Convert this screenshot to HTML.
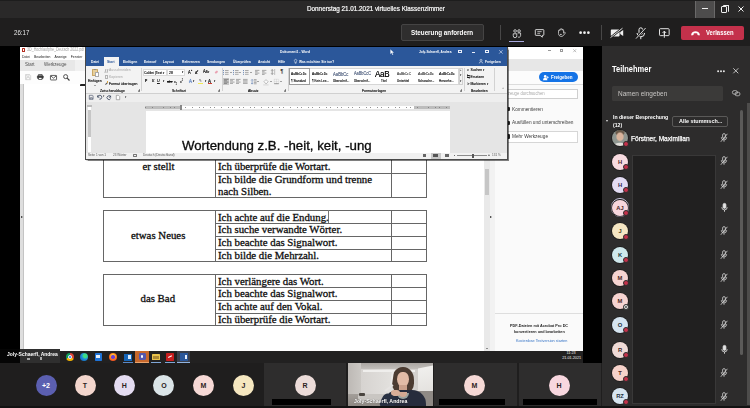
<!DOCTYPE html>
<html lang="de">
<head>
<meta charset="utf-8">
<title>Donnerstag 21.01.2021 virtuelles Klassenzimmer</title>
<style>
*{box-sizing:border-box;margin:0;padding:0}
html,body{width:750px;height:408px;overflow:hidden;background:#000}
body{position:relative;font-family:"Liberation Sans",sans-serif;color:#fff;-webkit-font-smoothing:antialiased}
.a{position:absolute}
.t{position:absolute;white-space:nowrap;line-height:1}
svg{position:absolute;overflow:visible}
/* ---------- Teams chrome ---------- */
#titlebar{left:0;top:0;width:750px;height:18px;background:#2a2929;border-top:1px solid #1d1d1d}
#toolbar{left:0;top:18px;width:750px;height:28px;background:#1f1e1e}
#stage{left:0;top:46px;width:602px;height:317px;background:#000}
#strip{left:0;top:363px;width:602px;height:45px;background:#1f1e1e}
#panel{left:602px;top:46px;width:148px;height:362px;background:#2d2c2c}
.btn{border-radius:2px}
.sx{transform-origin:0 50%;transform:scaleX(.86)}

/* ---------- shared screen ---------- */
#screen{left:20.3px;top:46.5px;width:562.5px;height:316.5px;background:#fff;overflow:hidden}
.ser{font-family:"Liberation Serif",serif;color:#0c0c0c;font-size:10.82px;-webkit-text-stroke:0.3px #111}
.ln{position:absolute;background:#666}
.tiny{font-size:4.4px;color:#333}

/* ---------- Word ---------- */
#word{left:85.1px;top:46.5px;width:422.6px;height:113.2px;background:#e5e5e5;border:0.9px solid #4a4a4a;border-top:none;box-shadow:0.5px 0.5px 1px rgba(0,0,0,.5)}
.wt{position:absolute;white-space:nowrap;line-height:1;font-size:4.3px;color:#fff;font-weight:bold;transform-origin:0 50%;transform:scaleX(.77)}
.rt{position:absolute;white-space:nowrap;line-height:1;font-size:4.1px;color:#1c1c1c;text-shadow:0 0 0.25px #333;transform-origin:0 50%;transform:scaleX(.84)}
.gsep{position:absolute;top:68px;width:0.5px;height:23px;background:#d2d2d2}

.at{position:absolute;white-space:nowrap;line-height:1;font-size:5.4px;color:#3c3c3c;transform-origin:0 50%;transform:scaleX(.88)}
.tb{position:absolute;top:353px;width:8px;height:8px}
/* avatars */
.av{position:absolute;border-radius:50%;text-align:center;font-weight:bold;color:#3a2a2a}
.pav{width:16px;height:16px;font-size:5.8px;line-height:16px;left:612px;box-shadow:0 0 0 0.8px #1c1b1b}
.dot{position:absolute;width:6px;height:6px;border-radius:50%;background:#c4314b;border:1px solid #2d2c2c;left:623px}
.sav{width:21px;height:21px;font-size:7px;line-height:21px;top:375px;color:#2c2222}
.tile{position:absolute;top:363px;height:45px;background:#2e2d2d}
.lbl{position:absolute;height:6px;background:#000;top:399px}
</style>
</head>
<body>
<!-- ================= TITLE BAR ================= -->
<div id="titlebar" class="a"></div>
<div class="t sx" style="left:307px;top:5px;font-size:7.8px;-webkit-text-stroke:0.2px #fff;transform:scaleX(.812)">Donnerstag 21.01.2021 virtuelles Klassenzimmer</div>
<div class="a" style="left:695px;top:1px;width:20px;height:17px;background:#4d4c4c;border-left:1px solid #6a6969;border-right:1px solid #6a6969"></div>
<div class="a" style="left:702px;top:8px;width:6px;height:1px;background:#eee"></div>
<div class="a" style="left:720.5px;top:6px;width:6px;height:7px;border:1px solid #eee;border-radius:1px"></div>
<div class="a" style="left:722.5px;top:4.5px;width:6px;height:7px;border-top:1px solid #eee;border-right:1px solid #eee;border-radius:1px"></div>
<svg style="left:738px;top:6px" width="6" height="6" viewBox="0 0 6 6"><path d="M0.5 0.5L5.5 5.5M5.5 0.5L0.5 5.5" stroke="#eee" stroke-width="1" fill="none"/></svg>

<!-- ================= TOOLBAR ================= -->
<div id="toolbar" class="a"></div>
<div class="t sx" style="left:14px;top:28.5px;font-size:7.6px;color:#e8e8e8;transform:scaleX(.81)">26:17</div>
<div class="a btn" style="left:401px;top:24px;width:83px;height:17px;background:#2f2e2e;border:1px solid #454444"></div>
<div class="t sx" style="left:411.3px;top:28.8px;font-size:7.6px;font-weight:bold;transform:scaleX(.828)">Steuerung anfordern</div>
<div class="a" style="left:499.5px;top:25px;width:1px;height:15px;background:#484747"></div>
<div class="a" style="left:601px;top:25px;width:1px;height:15px;background:#484747"></div>
<div class="a" style="left:509px;top:40.5px;width:15px;height:1.5px;background:#a6a7dc"></div>


<!-- toolbar icons -->
<svg style="left:511.5px;top:28.5px" width="10" height="9.2" viewBox="0 0 13 12" fill="none" stroke="#f0f0f0" stroke-width="1">
 <circle cx="4" cy="2.6" r="1.7"/><circle cx="9.2" cy="2.6" r="1.7"/>
 <path d="M1.6 6.2h4.6v2.6a2.3 2.6 0 0 1-4.6 0z"/><path d="M7.3 5.2h3.9v3.4a2.2 2.5 0 0 1-3.6 1.6"/>
</svg>
<svg style="left:535.2px;top:28.8px" width="9.3" height="9.3" viewBox="0 0 12 12" fill="none" stroke="#f0f0f0" stroke-width="1.1">
 <path d="M1.2 0.8h9.4a0.8 0.8 0 0 1 .8 .8v5.8a0.8 0.8 0 0 1-.8 .8H9.4v2.4L6.6 8.2H1.2a0.8 0.8 0 0 1-.8-.8V1.6a0.8 0.8 0 0 1 .8-.8z"/>
 <path d="M3 3.4h5.6M3 5.6h3.6" stroke-width="0.9"/>
</svg>
<svg style="left:557.4px;top:28.2px" width="8.4" height="10" viewBox="0 0 12 14" fill="none" stroke="#f0f0f0" stroke-width="1">
 <path d="M2.2 7.4V3.6a0.9 0.9 0 0 1 1.8 0V2.2a0.9 0.9 0 0 1 1.8 0v-.4a0.9 0.9 0 0 1 1.8 0v1.2a0.9 0.9 0 0 1 1.8 0v4.2l1.2-1.2a0.9 0.9 0 0 1 1.2 1.2L9 10.8a4 4 0 0 1-6.8-2.6z"/>
 <circle cx="5.6" cy="9" r="1" fill="#f0f0f0" stroke="none"/>
</svg>
<svg style="left:578.6px;top:31.4px" width="11" height="3.4" viewBox="0 0 11 3.4" fill="#f2f2f2"><circle cx="1.6" cy="1.7" r="1.35"/><circle cx="5.5" cy="1.7" r="1.35"/><circle cx="9.4" cy="1.7" r="1.35"/></svg>
<svg style="left:611px;top:28px" width="13" height="10" viewBox="0 0 13 10" fill="#f0f0f0" stroke="none">
 <path d="M0.6 1.6h7.2a0.8 0.8 0 0 1 .8 .8v5.2a0.8 0.8 0 0 1-.8 .8H0.6a0.8 0.8 0 0 1-.8-.8V2.4a0.8 0.8 0 0 1 .8-.8z"/><path d="M9.2 4l3-2v6l-3-2z"/>
 <path d="M-0.5 9.6L11.5 0.2" stroke="#1f1e1e" stroke-width="2.2"/><path d="M-0.5 9.6L11.5 0.2" stroke="#f0f0f0" stroke-width="0.9"/>
</svg>
<svg style="left:635px;top:26.5px" width="12" height="13" viewBox="0 0 12 13" fill="none" stroke="#f0f0f0" stroke-width="1">
 <rect x="4" y="0.8" width="3.6" height="6.6" rx="1.8"/><path d="M2 6a3.8 3.8 0 0 0 7.6 0M5.8 9.8v2.4"/>
 <path d="M1 11.6L10.6 1" stroke="#1f1e1e" stroke-width="2.4"/><path d="M1 11.6L10.6 1" stroke-width="0.9"/>
</svg>
<svg style="left:659px;top:28px" width="11" height="10.2" viewBox="0 0 13 12" fill="none" stroke="#f0f0f0" stroke-width="1.1">
 <rect x="0.6" y="0.8" width="11.4" height="8.2" rx="1"/><path d="M6.3 11.2V4M4.2 5.8l2.1-2.1 2.1 2.1" />
 <path d="M6.3 9v2.4" stroke="#1f1e1e" stroke-width="2.6"/><path d="M6.3 11.4V4.2"/>
</svg>
<div class="a btn" style="left:680.5px;top:25.5px;width:63px;height:14.5px;background:#c4314b"></div>
<svg style="left:691px;top:30.5px" width="9" height="5" viewBox="0 0 9 5" fill="#fff"><path d="M0.2 3.2C0.6 1.2 2.6 0.2 4.5 0.2s3.9 1 4.3 3l-.3 1.2-2-.5-.2-1.3c-1.1-.4-2.5-.4-3.6 0l-.2 1.3-2 .5z"/></svg>
<div class="t sx" style="left:705.5px;top:29.2px;font-size:7.4px;font-weight:bold;transform:scaleX(.8)">Verlassen</div>

<!-- ================= STAGE ================= -->
<div id="stage" class="a"></div>


<div id="screen" class="a"></div>
<!-- Acrobat chrome (left part) -->
<div class="a" style="left:20.3px;top:59.5px;width:487px;height:11.5px;background:#f1f1f1"></div>
<div class="a" style="left:20.3px;top:59.5px;width:55px;height:11.5px;background:#e8e8e8"></div>
<div class="a" style="left:22px;top:48px;width:2.6px;height:4px;border:0.8px solid #b52a1c;border-radius:0.6px"></div>
<div class="t tiny" id="atitle" style="left:26.8px;top:48.2px;color:#a2a2a2;font-size:4.6px;transform-origin:0 50%;transform:scaleX(.788)">3D_Hochlaufphe_Deutsch 2022.pdf</div>
<div class="t tiny" id="amenu" style="left:22.3px;top:54.8px;font-size:4.2px;color:#222;word-spacing:3.8px;transform-origin:0 50%;transform:scaleX(.815)">Datei Bearbeiten Anzeige Fenster</div>
<div class="t" id="atab1" style="left:25px;top:62.4px;font-size:5.6px;color:#505050;transform-origin:0 50%;transform:scaleX(.8)">Start</div>
<div class="t" id="atab2" style="left:44.2px;top:62.4px;font-size:5.6px;color:#505050;transform-origin:0 50%;transform:scaleX(.8)">Werkzeuge</div>
<div class="a" style="left:20.3px;top:71px;width:65px;height:13px;background:#fdfdfd"></div>
<svg style="left:24.5px;top:74.2px" width="6.2" height="6.2" viewBox="0 0 7 7" fill="none" stroke="#c9c9c9" stroke-width="0.8"><path d="M0.6 0.6h4.6l1.2 1.2v4.6H0.6z"/><path d="M2 0.8v1.8h2.6V0.8M1.8 6.2V4h3.4v2.2"/></svg>
<svg style="left:37px;top:74.2px" width="6.6" height="6" viewBox="0 0 8 7" fill="none" stroke="#3a3a3a" stroke-width="0.9"><path d="M1.8 2V0.5h4.4V2"/><rect x="0.5" y="2" width="7" height="3.2" rx="0.5" fill="#3a3a3a"/><rect x="2" y="4" width="4" height="2.6" fill="#fff"/></svg>
<svg style="left:50px;top:74.6px" width="7" height="5.6" viewBox="0 0 8 6.4" fill="none" stroke="#3a3a3a" stroke-width="0.9"><rect x="0.5" y="0.5" width="7" height="5.2" rx="0.6"/><path d="M0.8 1l3.2 2.6L7.2 1"/></svg>
<svg style="left:63px;top:74px" width="7" height="7" viewBox="0 0 8 8" fill="none" stroke="#3a3a3a" stroke-width="1"><circle cx="3" cy="3" r="2.3"/><path d="M4.8 4.8L7.4 7.4" stroke-width="1.3"/></svg>
<!-- Acrobat left pane strip -->
<div class="a" style="left:20.3px;top:84px;width:3.4px;height:267px;background:#dedede;border-right:0.6px solid #c4c4c4"></div>
<div class="a" style="left:21.2px;top:216px;width:0;height:0;border-left:2.2px solid #222;border-top:1.8px solid transparent;border-bottom:1.8px solid transparent"></div>
<div class="a" style="left:80px;top:84.3px;width:6px;height:1.6px;background:#222;border-radius:1px 0 0 0"></div>

<!-- PDF document tables -->
<!-- table 1 (partial) -->
<div class="ln" style="left:102.6px;top:159px;width:0.9px;height:38.5px"></div>
<div class="ln" style="left:214.6px;top:159px;width:0.9px;height:38.5px"></div>
<div class="ln" style="left:391.2px;top:159px;width:0.9px;height:38.5px"></div>
<div class="ln" style="left:426px;top:159px;width:0.9px;height:38.5px"></div>
<div class="ln" style="left:102.6px;top:196.8px;width:324px;height:0.9px"></div>
<div class="ln" style="left:214.6px;top:172.9px;width:212px;height:0.9px"></div>
<div class="t ser" style="left:142.4px;top:160.6px">er stellt</div>
<div class="t ser" style="left:218px;top:161px">Ich überprüfe die Wortart.</div>
<div class="t ser" style="left:218px;top:174.3px">Ich bilde die Grundform und trenne</div>
<div class="t ser" style="left:218px;top:186.3px">nach Silben.</div>
<!-- table 2 -->
<div class="a" style="left:102.6px;top:210.3px;width:324.3px;height:52px;border:0.9px solid #666"></div>
<div class="ln" style="left:214.6px;top:210.3px;width:0.9px;height:52px"></div>
<div class="ln" style="left:391.2px;top:210.3px;width:0.9px;height:52px"></div>
<div class="ln" style="left:214.6px;top:223.1px;width:212px;height:0.9px"></div>
<div class="ln" style="left:214.6px;top:235.9px;width:212px;height:0.9px"></div>
<div class="ln" style="left:214.6px;top:248.7px;width:212px;height:0.9px"></div>
<div class="ln" style="left:328.3px;top:210.3px;width:0.6px;height:13px;background:#777"></div>
<div class="t ser" style="left:131px;top:229.5px">etwas Neues</div>
<div class="t ser" style="left:218px;top:211.6px">Ich achte auf die Endung.</div>
<div class="t ser" style="left:218px;top:224.4px">Ich suche verwandte Wörter.</div>
<div class="t ser" style="left:218px;top:237.2px">Ich beachte das Signalwort.</div>
<div class="t ser" style="left:218px;top:250px">Ich bilde die Mehrzahl.</div>
<!-- table 3 -->
<div class="a" style="left:102.6px;top:274.2px;width:324.3px;height:52px;border:0.9px solid #666"></div>
<div class="ln" style="left:214.6px;top:274.2px;width:0.9px;height:52px"></div>
<div class="ln" style="left:391.2px;top:274.2px;width:0.9px;height:52px"></div>
<div class="ln" style="left:214.6px;top:287px;width:212px;height:0.9px"></div>
<div class="ln" style="left:214.6px;top:299.8px;width:212px;height:0.9px"></div>
<div class="ln" style="left:214.6px;top:312.6px;width:212px;height:0.9px"></div>
<div class="t ser" style="left:140.5px;top:293.4px">das Bad</div>
<div class="t ser" style="left:218px;top:275.5px">Ich verlängere das Wort.</div>
<div class="t ser" style="left:218px;top:288.3px">Ich beachte das Signalwort.</div>
<div class="t ser" style="left:218px;top:301.1px">Ich achte auf den Vokal.</div>
<div class="t ser" style="left:218px;top:313.9px">Ich überprüfe die Wortart.</div>

<!-- Acrobat scrollbar + splitter -->
<div class="a" style="left:484px;top:159px;width:5.8px;height:192px;background:#e9e9e9"></div>
<div class="a" style="left:485px;top:169px;width:4px;height:25.5px;background:#c6c6c6"></div>
<div class="a" style="left:489.8px;top:159px;width:5.2px;height:192px;background:#f2f2f2"></div>
<div class="a" style="left:490.4px;top:216px;width:0;height:0;border-left:2.4px solid #222;border-top:1.9px solid transparent;border-bottom:1.9px solid transparent"></div>
<div class="a" style="left:485.6px;top:348.4px;width:0;height:0;border-top:1.8px solid #333;border-left:1.4px solid transparent;border-right:1.4px solid transparent"></div>
<!-- Acrobat right pane -->
<div class="a" style="left:495px;top:84px;width:88px;height:267px;background:#fafafa"></div>



<!-- Acrobat right part -->
<div class="a" style="left:507.8px;top:46.5px;width:75px;height:12.5px;background:#fff"></div>
<div class="a" style="left:507.8px;top:59px;width:75px;height:12px;background:#e7e7e7"></div>
<div class="a" style="left:507.8px;top:71px;width:75px;height:14px;background:#fcfcfc"></div>
<div class="a" style="left:507.8px;top:84.4px;width:75px;height:0.5px;background:#dcdcdc"></div>
<div class="a" style="left:547.6px;top:50.4px;width:3px;height:0.6px;background:#999"></div>
<div class="a" style="left:560px;top:48.6px;width:3.4px;height:3.2px;border:0.6px solid #999"></div>
<svg style="left:573.4px;top:48.6px" width="3.4" height="3.4" viewBox="0 0 3.4 3.4"><path d="M0.2 0.2L3.2 3.2M3.2 0.2L0.2 3.2" stroke="#999" stroke-width="0.6"/></svg>
<div class="a" style="left:539px;top:72.4px;width:39px;height:9.6px;border-radius:5px;background:#1473e6"></div>
<svg style="left:543.4px;top:74.6px" width="6" height="5.4" viewBox="0 0 6 5.4" fill="#fff"><circle cx="2.2" cy="1.4" r="1.3"/><path d="M0 5.2a2.2 2.4 0 0 1 4.4 0z"/><path d="M4.6 1.2v2.4M3.4 2.4h2.4" stroke="#fff" stroke-width="0.7"/></svg>
<div class="at" style="left:551.4px;top:74.6px;font-size:5.4px;color:#fff;font-weight:bold;transform:scaleX(.84)">Freigeben</div>
<div class="a" style="left:500px;top:88.6px;width:78px;height:10.8px;background:#fff;border:0.6px solid #cfcfcf"></div>
<div class="at" style="left:497.6px;top:91.6px;font-size:4.8px;color:#a9a9a9">Werkzeuge durchsuchen</div>
<div class="at" style="left:512px;top:107px">Kommentieren</div>
<div class="at" style="left:512px;top:120.4px">Ausfüllen und unterschreiben</div>
<div class="a" style="left:500px;top:131px;width:78px;height:11.6px;background:#fff;border:0.6px solid #d6d6d6"></div>
<div class="at" style="left:512px;top:134px">Mehr Werkzeuge</div>
<div class="a" style="left:495px;top:313px;width:88px;height:0.5px;background:#dedede"></div>
<div class="at" style="left:510.4px;top:324px;font-size:4.2px;font-weight:bold;color:#222;transform:scaleX(.9)">PDF-Dateien mit Acrobat Pro DC</div>
<div class="at" style="left:513.6px;top:329.6px;font-size:4.2px;font-weight:bold;color:#222;transform:scaleX(.9)">konvertieren und bearbeiten</div>
<div class="at" style="left:516px;top:338.6px;font-size:4.2px;color:#2f6fc4;transform:scaleX(.9)">Kostenlose Testversion starten</div>

<div class="a" style="left:507.6px;top:106.6px;width:2px;height:4px;background:#222;border-radius:0 1px 1px 0"></div><div class="a" style="left:507.6px;top:120.6px;width:2px;height:4px;background:#222;border-radius:0 1px 1px 0"></div><div class="a" style="left:507.6px;top:134.4px;width:2px;height:4.4px;background:#222;border-radius:0 1px 1px 0"></div>
<!-- ================= WORD WINDOW ================= -->
<div id="word" class="a"></div>
<div class="a" style="left:85.8px;top:46.5px;width:421.4px;height:19.7px;background:#2b579a"></div>
<div class="wt" style="left:280px;top:50.2px;font-size:4.4px">Dokument1  -  Word</div>
<div class="wt" style="left:419px;top:50.2px;font-size:4.4px;transform:scaleX(.72)">Joly-Schaerfl, Andrea</div>
<svg style="left:389.5px;top:48.6px" width="4.6" height="6.4" viewBox="0 0 4.6 6.4"><path d="M0.3 0.2v5l1.2-1.1 0.9 2 0.9-.4-.9-1.9h1.7z" fill="#fff" stroke="#2b579a" stroke-width="0.2"/></svg>
<div class="a" style="left:458px;top:50.2px;width:3.6px;height:3px;border:0.6px solid #e8eefa"></div>
<div class="a" style="left:471.8px;top:52px;width:3px;height:0.6px;background:#e8eefa"></div>
<div class="a" style="left:485.4px;top:50px;width:3.4px;height:3.4px;border:0.6px solid #e8eefa"></div>
<svg style="left:498.6px;top:49.8px" width="3.8" height="3.8" viewBox="0 0 3.8 3.8"><path d="M0.2 0.2L3.6 3.6M3.6 0.2L0.2 3.6" stroke="#e8eefa" stroke-width="0.6"/></svg>
<!-- tabs -->
<div class="a" style="left:104px;top:56.6px;width:14.6px;height:9.8px;background:#f3f3f3"></div>
<div class="wt" style="left:90.6px;top:59.6px">Datei</div>
<div class="wt" style="left:107.4px;top:59.6px;color:#2b579a">Start</div>
<div class="wt" style="left:123px;top:59.6px">Einfügen</div>
<div class="wt" style="left:143.6px;top:59.6px">Entwurf</div>
<div class="wt" style="left:163.4px;top:59.6px">Layout</div>
<div class="wt" style="left:182px;top:59.6px">Referenzen</div>
<div class="wt" style="left:207px;top:59.6px">Sendungen</div>
<div class="wt" style="left:233px;top:59.6px">Überprüfen</div>
<div class="wt" style="left:258px;top:59.6px">Ansicht</div>
<div class="wt" style="left:277.6px;top:59.6px">Hilfe</div>
<svg style="left:293.6px;top:58.6px" width="3.2" height="5" viewBox="0 0 3.2 5" fill="none" stroke="#fff" stroke-width="0.5"><path d="M1.6 0.3a1.3 1.3 0 0 1 .8 2.3v.9H.8v-.9a1.3 1.3 0 0 1 .8-2.3zM.9 4.3h1.4"/></svg>
<div class="wt" style="left:298.6px;top:59.6px">Was möchten Sie tun?</div>
<svg style="left:479.4px;top:58.8px" width="4" height="4.6" viewBox="0 0 4 4.6" fill="none" stroke="#fff" stroke-width="0.5"><circle cx="2" cy="1.3" r="1"/><path d="M0.3 4.4a1.7 1.7 0 0 1 3.4 0"/></svg>
<div class="wt" style="left:484.6px;top:59.6px">Freigeben</div>
<!-- ribbon -->
<div class="a" style="left:85.8px;top:66.2px;width:421.4px;height:36px;background:#f3f3f3"></div>
<div class="a" style="left:85.8px;top:93.2px;width:421.4px;height:9px;background:#eee"></div><div class="a" style="left:85.8px;top:93.2px;width:421.4px;height:0.6px;background:#d0d0d0"></div>
<div class="gsep" style="left:141px"></div><div class="gsep" style="left:221.6px"></div><div class="gsep" style="left:287.6px"></div><div class="gsep" style="left:464px"></div><div class="gsep" style="left:493.8px"></div>
<!-- clipboard group -->
<div class="a" style="left:92.4px;top:69.4px;width:5.2px;height:6.4px;background:#e7cf9b;border:0.5px solid #c8a766;border-radius:0.6px"></div>
<div class="a" style="left:93.8px;top:68.6px;width:2.4px;height:1.6px;background:#8a8a8a;border-radius:0.4px"></div>
<div class="a" style="left:95.4px;top:71.8px;width:3.8px;height:4.8px;background:#fff;border:0.5px solid #a9a9a9"></div>
<div class="rt" style="left:88px;top:78.8px">Einfügen</div>
<div class="a" style="left:94.4px;top:85px;width:0;height:0;border-top:1.2px solid #555;border-left:1px solid transparent;border-right:1px solid transparent"></div>
<div class="a" style="left:105px;top:68.6px;width:2.6px;height:3.6px;border-left:0.6px solid #b0b0b0;border-right:0.6px solid #b0b0b0;transform:skewX(-14deg)"></div><div class="rt" style="left:109.4px;top:68.4px;color:#a6a6a6;text-shadow:none">Ausschneiden</div>
<div class="a" style="left:104.8px;top:75.2px;width:3px;height:3.6px;border:0.5px solid #b4b4b4"></div><div class="rt" style="left:109.4px;top:75.2px;color:#a6a6a6;text-shadow:none">Kopieren</div>
<div class="a" style="left:104.8px;top:83.2px;width:3.4px;height:1.2px;background:#555;transform:rotate(-45deg)"></div><div class="a" style="left:106.6px;top:81.2px;width:1.8px;height:1.8px;background:#d9a441"></div><div class="rt" style="left:109.4px;top:81.8px">Format übertragen</div>
<div class="rt" style="left:99.6px;top:88.6px">Zwischenablage</div>
<!-- font group -->
<div class="a" style="left:142.8px;top:69.4px;width:24.2px;height:6.6px;background:#fff;border:0.5px solid #dadada"></div>
<div class="rt" style="left:144.4px;top:70.8px">Calibri (Text<span style="font-size:3px"> ▾</span></div>
<div class="a" style="left:167.4px;top:69.4px;width:17.6px;height:6.6px;background:#fff;border:0.5px solid #dadada"></div>
<div class="rt" style="left:169.4px;top:70.8px">28</div>
<div class="rt" style="left:181.6px;top:71.2px;font-size:3px">▾</div>
<div class="rt" style="left:188px;top:70.2px;font-size:4.8px">A<sup style="font-size:2.6px">▴</sup></div>
<div class="rt" style="left:195px;top:70.6px;font-size:4.2px">A<sup style="font-size:2.6px">▾</sup></div>
<div class="rt" style="left:202.6px;top:70.4px;font-size:4.6px">Aa<span style="font-size:3px"> ▾</span></div>
<div class="a" style="left:215px;top:70.8px;width:3.2px;height:2.4px;background:#e9a3b3;transform:rotate(-40deg);border-radius:0.5px"></div>
<div class="rt" style="left:145.2px;top:79.4px;font-size:4.4px;font-weight:bold">F</div>
<div class="rt" style="left:151.6px;top:79.4px;font-size:4.4px;font-style:italic;font-family:'Liberation Serif',serif">K</div>
<div class="rt" style="left:157.4px;top:79.4px;font-size:4.4px;text-decoration:underline">U</div>
<div class="rt" style="left:162.6px;top:80.4px;font-size:3px">▾</div>
<div class="rt" style="left:166.6px;top:79.8px;font-size:4px;text-decoration:line-through">abc</div>
<div class="rt" style="left:174.2px;top:79.8px;font-size:4px">x<sub style="font-size:2.6px">2</sub></div>
<div class="rt" style="left:180px;top:79.8px;font-size:4px">x<sup style="font-size:2.6px">2</sup></div>
<div class="rt" style="left:188.6px;top:78.8px;font-size:5.2px;color:#6a8fd0;text-shadow:0 0 0.8px #2b579a">A</div>
<div class="rt" style="left:193.4px;top:80.4px;font-size:3px">▾</div>
<div class="a" style="left:198px;top:83.2px;width:5px;height:1.3px;background:#f2ea55"></div>
<div class="rt" style="left:198.8px;top:78.8px;font-size:4.2px;color:#666">✎</div>
<div class="rt" style="left:204.6px;top:80.4px;font-size:3px">▾</div>
<div class="rt" style="left:208.4px;top:78.6px;font-size:5px;font-weight:bold;color:#444">A</div>
<div class="a" style="left:208.2px;top:83.3px;width:4.2px;height:1.2px;background:#cf3a2e"></div>
<div class="rt" style="left:214px;top:80.4px;font-size:3px">▾</div>
<div class="rt" style="left:172px;top:88.6px">Schriftart</div>
<div class="rt" style="left:138px;top:88.8px;font-size:3px;color:#777">◢</div>
<div class="rt" style="left:217.6px;top:88.8px;font-size:3px;color:#777">◢</div>
<!-- paragraph group -->
<svg style="left:223.4px;top:70px" width="1.2" height="5" viewBox="0 0 1.2 5"><path d="M0 0.5h1M0 2.4h1M0 4.3h1" stroke="#4a6ea8" stroke-width="0.8"/></svg>
<svg style="left:225.20000000000002px;top:70px" width="3.6" height="5" viewBox="0 0 3.6 5"><path d="M0 0.5h3.6M0 2.4h3.6M0 4.3h3.6" stroke="#6a6a6a" stroke-width="0.55"/></svg>
<div class="a" style="left:229.8px;top:71.8px;width:0;height:0;border-top:1.1px solid #555;border-left:0.9px solid transparent;border-right:0.9px solid transparent"></div>
<svg style="left:233px;top:70px" width="1.2" height="5" viewBox="0 0 1.2 5"><path d="M0 0.5h1M0 2.4h1M0 4.3h1" stroke="#4a6ea8" stroke-width="0.8"/></svg>
<svg style="left:234.8px;top:70px" width="3.6" height="5" viewBox="0 0 3.6 5"><path d="M0 0.5h3.6M0 2.4h3.6M0 4.3h3.6" stroke="#6a6a6a" stroke-width="0.55"/></svg>
<div class="a" style="left:239.4px;top:71.8px;width:0;height:0;border-top:1.1px solid #555;border-left:0.9px solid transparent;border-right:0.9px solid transparent"></div>
<svg style="left:243.4px;top:70px" width="1.2" height="5" viewBox="0 0 1.2 5"><path d="M0 0.5h1M0 2.4h1M0 4.3h1" stroke="#4a6ea8" stroke-width="0.8"/></svg>
<svg style="left:245.20000000000002px;top:70px" width="3.6" height="5" viewBox="0 0 3.6 5"><path d="M0 0.5h3.6M0 2.4h3.6M0 4.3h3.6" stroke="#6a6a6a" stroke-width="0.55"/></svg>
<div class="a" style="left:249.8px;top:71.8px;width:0;height:0;border-top:1.1px solid #555;border-left:0.9px solid transparent;border-right:0.9px solid transparent"></div>
<svg style="left:255.4px;top:70px" width="4.4" height="5" viewBox="0 0 4.4 5"><path d="M0 0.40h4.4M0 1.75h2.6M0 3.10h4.4M0 4.45h2.6" stroke="#6a6a6a" stroke-width="0.55" fill="none"/></svg>
<svg style="left:262.2px;top:70px" width="4.4" height="5" viewBox="0 0 4.4 5"><path d="M0 0.40h4.4M0 1.75h2.6M0 3.10h4.4M0 4.45h2.6" stroke="#6a6a6a" stroke-width="0.55" fill="none"/></svg>
<svg style="left:271px;top:69.4px" width="4.4" height="6" viewBox="0 0 4.4 6" fill="none" stroke="#555" stroke-width="0.55"><path d="M1.2 0.6v4.8M0.2 1.6l1-1 1 1M0.2 4.4l1 1 1-1M3 1h1.2M3 3h1.2M3 5h1.2"/></svg>
<div class="rt" style="left:280.4px;top:69.4px;font-size:5px;color:#444;transform:none">¶</div>
<div class="a" style="left:222.6px;top:78.2px;width:6.6px;height:6.6px;background:#c6c6c6"></div>
<svg style="left:223.6px;top:79.2px" width="4.6" height="5" viewBox="0 0 4.6 5"><path d="M0 0.40h4.6M0 1.75h3M0 3.10h4.6M0 4.45h3" stroke="#555" stroke-width="0.55" fill="none"/></svg>
<svg style="left:229.9px;top:79.2px" width="4.6" height="5" viewBox="0 0 4.6 5"><path d="M0 0.40h4.6M0 1.75h3M0 3.10h4.6M0 4.45h3" stroke="#6a6a6a" stroke-width="0.55" fill="none"/></svg>
<svg style="left:236.3px;top:79.2px" width="4.6" height="5" viewBox="0 0 4.6 5"><path d="M0 0.40h4.6M0 1.75h3M0 3.10h4.6M0 4.45h3" stroke="#6a6a6a" stroke-width="0.55" fill="none"/></svg>
<svg style="left:242.7px;top:79.2px" width="4.6" height="5" viewBox="0 0 4.6 5"><path d="M0 0.40h4.6M0 1.75h4.6M0 3.10h4.6M0 4.45h4.6" stroke="#6a6a6a" stroke-width="0.55" fill="none"/></svg>
<svg style="left:250.6px;top:78.8px" width="5.6" height="5.6" viewBox="0 0 5.6 5.6" fill="none" stroke-width="0.55"><path d="M1.1 0.5v4.6M0.2 1.4l.9-.9.9.9M0.2 4.2l.9.9.9-.9" stroke="#4a6ea8"/><path d="M2.8 0.6h2.8M2.8 2h2.8M2.8 3.4h2.8M2.8 4.8h2.8" stroke="#6a6a6a"/></svg>
<div class="a" style="left:257.4px;top:81.2px;width:0;height:0;border-top:1.1px solid #555;border-left:0.9px solid transparent;border-right:0.9px solid transparent"></div>
<svg style="left:262.6px;top:78.6px" width="6" height="6.4" viewBox="0 0 6 6.4" fill="none"><path d="M1 2.6l2-2 2.2 2.2-2.2 2.2z" stroke="#888" stroke-width="0.5" fill="#fafafa"/><path d="M0.2 5.9h5.4" stroke="#d4d4d4" stroke-width="0.9"/></svg>
<div class="a" style="left:270px;top:81.2px;width:0;height:0;border-top:1.1px solid #555;border-left:0.9px solid transparent;border-right:0.9px solid transparent"></div>
<svg style="left:274px;top:79.2px" width="5" height="5" viewBox="0 0 5 5" fill="none"><path d="M0.3 0.3h4.4v4.4M0.3 0.3v4.4M2.5 0.3v4.4M0.3 2.5h4.4" stroke="#aaa" stroke-width="0.4" stroke-dasharray="0.5 0.5"/><path d="M0.2 4.7h4.6" stroke="#555" stroke-width="0.6"/></svg>
<div class="a" style="left:280.4px;top:81.2px;width:0;height:0;border-top:1.1px solid #555;border-left:0.9px solid transparent;border-right:0.9px solid transparent"></div>
<div class="rt" style="left:247.6px;top:88.6px">Absatz</div>
<div class="rt" style="left:283.6px;top:88.8px;font-size:3px;color:#777">◢</div>
<!-- styles gallery -->
<div class="a" style="left:289px;top:68px;width:170.4px;height:17.2px;background:#fff;border:0.5px solid #d6d6d6"></div>
<div class="a" style="left:289.4px;top:68.3px;width:20.4px;height:16.6px;border:0.7px solid #9c9c9c"></div>
<div class="rt" style="left:291.4px;top:72.6px;font-size:3.8px;color:#222">AaBbCcDc</div>
<div class="rt" style="left:291.4px;top:79.8px;font-size:3.6px">¶ Standard</div>
<div class="rt" style="left:312.4px;top:72.6px;font-size:3.8px;color:#222">AaBbCcDc</div>
<div class="rt" style="left:312.4px;top:79.8px;font-size:3.6px">¶ Kein Lee...</div>
<div class="rt" style="left:333px;top:71.6px;font-size:5px;color:#7f94bd">AaBbCc</div>
<div class="rt" style="left:333px;top:79.8px;font-size:3.6px">Überschrif...</div>
<div class="rt" style="left:354px;top:71.8px;font-size:4.6px;color:#7f94bd">AaBbCcC</div>
<div class="rt" style="left:354px;top:79.8px;font-size:3.6px">Überschrif...</div>
<div class="rt" style="left:375.4px;top:68.6px;font-size:9.6px;color:#111;letter-spacing:-0.3px">AaB</div>
<div class="rt" style="left:380.6px;top:79.8px;font-size:3.6px">Titel</div>
<div class="rt" style="left:397px;top:72.6px;font-size:3.8px;color:#666">AaBbCcC</div>
<div class="rt" style="left:397px;top:79.8px;font-size:3.6px">Untertitel</div>
<div class="rt" style="left:417.6px;top:72.6px;font-size:3.8px;font-style:italic;color:#555">AaBbCcDc</div>
<div class="rt" style="left:417.6px;top:79.8px;font-size:3.6px">Schwache...</div>
<div class="rt" style="left:438.6px;top:72.6px;font-size:3.8px;font-style:italic;color:#222">AaBbCcDc</div>
<div class="rt" style="left:438.6px;top:79.8px;font-size:3.6px">Hervorhe...</div>
<div class="a" style="left:459.4px;top:68px;width:3.6px;height:17.2px;background:#f3f3f3;border:0.5px solid #d0d0d0"></div>
<div class="rt" style="left:460.2px;top:69.6px;font-size:2.6px;color:#999">▴</div>
<div class="rt" style="left:460.2px;top:75.2px;font-size:2.6px;color:#555">▾</div>
<div class="rt" style="left:460.2px;top:80.8px;font-size:2.6px;color:#555">▾</div>
<div class="rt" style="left:361.6px;top:88.6px">Formatvorlagen</div>
<div class="rt" style="left:460.2px;top:88.8px;font-size:3px;color:#777">◢</div>
<!-- edit group -->
<div class="rt" style="left:467.4px;top:68.2px"><span style="font-size:4.6px">⌕</span> Suchen <span style="font-size:3px">▾</span></div>
<div class="rt" style="left:467.4px;top:75.2px"><span style="font-size:4.2px">⇆</span> Ersetzen</div>
<div class="rt" style="left:467.4px;top:81.8px"><span style="font-size:4.2px;color:#777">➤</span> Markieren <span style="font-size:3px">▾</span></div>
<div class="rt" style="left:471px;top:88.6px">Bearbeiten</div>
<div class="rt" style="left:501.6px;top:88.4px;font-size:3.4px;color:#444">⌃</div>
<!-- quick access -->
<svg style="left:89px;top:95.2px" width="4.4" height="4.6" viewBox="0 0 4.4 4.6" fill="none" stroke="#39455c" stroke-width="0.6"><path d="M0.3 0.3h3.2l.6 .6v3.4H0.3z"/><path d="M1.2 4.2V2.8h2v1.4" /></svg>
<svg style="left:96.6px;top:95.2px" width="5" height="4.4" viewBox="0 0 5 4.4" fill="none" stroke="#39455c" stroke-width="0.8"><path d="M0.6 0.4v1.8h1.8M0.8 2a2 2 0 1 1 1.6 2.2"/></svg>
<div class="rt" style="left:102.6px;top:96.4px;font-size:2.6px;color:#777">▾</div>
<svg style="left:107.4px;top:95.2px" width="4.6" height="4.6" viewBox="0 0 4.6 4.6" fill="none" stroke="#39455c" stroke-width="0.8"><path d="M3.6 0.6v1.6H2M3.8 2.2a1.9 1.9 0 1 0-.2 1.4"/></svg>
<svg style="left:116.4px;top:95px" width="4" height="5" viewBox="0 0 4 5" fill="#fff" stroke="#666" stroke-width="0.5"><path d="M0.3 0.3h2.2l1.2 1.2v3.2H0.3z"/></svg>
<div class="rt" style="left:125.4px;top:96.2px;font-size:2.8px;color:#666">▾</div>
<!-- rulers -->
<div class="a" style="left:88px;top:105.4px;width:3.2px;height:46.2px;background:#fff"></div>
<div class="a" style="left:88px;top:110.4px;width:3.2px;height:26.6px;background:#c6c6c6"></div>
<div class="a" style="left:87.4px;top:104.6px;width:4.4px;height:2.6px;background:#f7f7f7;border:0.4px solid #bbb"></div>
<div class="a" style="left:145px;top:105.6px;width:305.4px;height:3.2px;background:#fff"></div>
<div class="a" style="left:145px;top:105.6px;width:36.4px;height:3.2px;background:#bdbdbd"></div>
<div class="a" style="left:414px;top:105.6px;width:36.4px;height:3.2px;background:#bdbdbd"></div>
<div class="a" style="left:145px;top:106.9px;width:305.4px;height:0.7px;background:repeating-linear-gradient(90deg,#777 0 0.6px,transparent 0.6px 3.63px);opacity:.8"></div>
<div class="a" style="left:180.4px;top:104.6px;width:1.8px;height:5.2px;background:#f4f4f4;border:0.4px solid #888"></div>
<!-- page -->
<div class="a" style="left:145.8px;top:110.6px;width:304.6px;height:42.2px;background:#fff"></div>
<div class="t" id="big" style="left:182.2px;top:139.2px;font-size:13.6px;color:#0a0a0a;-webkit-text-stroke:0.35px #111;transform-origin:0 50%;transform:scaleX(.974)">Wortendung z.B. -heit, keit, -ung</div>
<!-- status bar -->
<div class="a" style="left:85.8px;top:152.6px;width:421.4px;height:6px;background:#f1f1f1"></div>
<div class="rt" style="left:88px;top:153.7px;font-size:3.7px;color:#555;text-shadow:none">Seite 1 von 1</div>
<div class="rt" style="left:113px;top:153.7px;font-size:3.7px;color:#555;text-shadow:none">23 Wörter</div>
<div class="a" style="left:133.4px;top:153.7px;width:3.6px;height:3.4px;border:0.5px solid #777;border-radius:0.4px"></div>
<div class="rt" style="left:143px;top:153.7px;font-size:3.7px;color:#555;text-shadow:none">Deutsch (Deutschland)</div>
<div class="a" style="left:423px;top:153.7px;width:3.4px;height:3.4px;background:repeating-linear-gradient(#666 0 0.5px,transparent 0.5px 1.1px)"></div>
<div class="a" style="left:430.6px;top:152.6px;width:10.4px;height:6px;background:#c8c8c8"></div>
<div class="a" style="left:433.2px;top:153.6px;width:5px;height:3.8px;background:repeating-linear-gradient(#555 0 0.5px,transparent 0.5px 1.1px);border:0.4px solid #555"></div>
<div class="a" style="left:445.4px;top:153.7px;width:3.4px;height:3.4px;background:repeating-linear-gradient(#666 0 0.5px,transparent 0.5px 1.1px)"></div>
<div class="rt" style="left:454.4px;top:153.1px;font-size:4px">-</div>
<div class="a" style="left:457.4px;top:155.4px;width:30px;height:0.5px;background:#8a8a8a"></div>
<div class="a" style="left:472.4px;top:153.6px;width:1.2px;height:4px;background:#555"></div>
<div class="rt" style="left:488px;top:153.3px;font-size:4px">+</div>
<div class="rt" style="left:492.4px;top:153.7px;font-size:3.7px;color:#555;text-shadow:none">131 %</div>


<!-- Windows taskbar of shared screen -->
<div class="a" style="left:20.3px;top:351px;width:562.5px;height:12px;background:#222121"></div>
<div class="a" style="left:0;top:348.6px;width:60px;height:14.4px;background:#2f2f2f"></div>
<div class="a" style="left:0;top:348.6px;width:20.3px;height:14.4px;background:#050505"></div>
<div class="t sx" style="left:6.8px;top:351.8px;font-size:5.4px;font-weight:bold;color:#fff;transform:scaleX(.92)">Joly-Schaerfl, Andrea</div>
<div class="a" style="left:27px;top:357.6px;width:3px;height:2.2px;border:0.5px solid #aaa"></div>
<div class="a" style="left:39.6px;top:357.4px;width:1.6px;height:2.6px;border-left:0.6px solid #aaa;border-right:0.6px solid #aaa"></div>
<!-- taskbar icons -->
<div class="tb" style="left:66px;border-radius:50%;background:conic-gradient(#db4437 0 120deg,#f4b400 120deg 240deg,#0f9d58 240deg 360deg)"></div>
<div class="a" style="left:68.2px;top:355.2px;width:3.6px;height:3.6px;border-radius:50%;background:#4285f4;border:0.6px solid #fff"></div>
<div class="tb" style="left:80.4px;border-radius:50%;background:radial-gradient(circle at 65% 35%,#3ddc84 0 25%,#1f8fdd 45%,#0c59a4 100%)"></div>
<div class="tb" style="left:95px;top:353.4px;width:7.4px;height:7.4px;background:#1e73d8;border-radius:0.8px"></div>
<div class="a" style="left:96.4px;top:354.6px;width:3.6px;height:3px;background:#fff;opacity:.9"></div>
<div class="tb" style="left:109.4px;border-radius:50%;background:radial-gradient(circle at 50% 40%,#ffcf3a 0 25%,#ff7a1a 50%,#d8262c 100%)"></div>
<div class="a" style="left:111.4px;top:355.4px;width:3.4px;height:3.4px;border-radius:50%;background:#6b3fd6"></div>
<div class="tb" style="left:124px;top:353.6px;width:8px;height:7px;background:#1565b8"></div>
<div class="a" style="left:127.6px;top:354.8px;width:3.6px;height:4.4px;background:#d9ecff"></div>
<div class="a" style="left:122.6px;top:361.6px;width:10.6px;height:0.8px;background:#5a89c8"></div>
<div class="a" style="left:135.4px;top:351px;width:13.6px;height:12px;background:#c7682c"></div>
<div class="a" style="left:139px;top:353.2px;width:6.6px;height:6.6px;border-radius:1.4px;background:#5558af"></div>
<div class="a" style="left:141.4px;top:354.8px;width:2px;height:3.2px;background:#fff;border-radius:1px"></div>
<div class="a" style="left:135.4px;top:362px;width:13.6px;height:1px;background:#e9a56f"></div>
<div class="tb" style="left:152px;top:354px;width:8px;height:6.4px;background:#e8c24a;border-radius:0.6px"></div>
<div class="a" style="left:153.4px;top:356px;width:5.2px;height:2.6px;background:#7a5a20;opacity:.55"></div>
<div class="a" style="left:150.6px;top:361.6px;width:10.6px;height:0.8px;background:#7fa6d6"></div>
<div class="tb" style="left:166.4px;top:353.4px;width:7.4px;height:7.4px;background:#c81e1e;border-radius:0.8px"></div>
<div class="a" style="left:168px;top:356px;width:4.4px;height:1px;background:#fff;transform:rotate(-25deg)"></div>
<div class="a" style="left:164.6px;top:361.6px;width:10.6px;height:0.8px;background:#7fa6d6"></div>
<div class="a" style="left:177.4px;top:351px;width:13px;height:12px;background:#3a3f4a"></div>
<div class="tb" style="left:180px;top:353.4px;width:8px;height:7.2px;background:#2b579a"></div>
<div class="a" style="left:184.6px;top:354.6px;width:2.8px;height:4.8px;background:#e6eefb"></div>
<div class="a" style="left:177.4px;top:361.8px;width:13px;height:0.8px;background:#8fb2e0"></div>
<div class="t" style="left:566.4px;top:352.4px;font-size:3.8px;color:#eee">11:23</div>
<div class="t" style="left:562.2px;top:357.2px;font-size:3.8px;color:#eee">21.01.2021</div>

<!-- ================= BOTTOM STRIP ================= -->
<div id="strip" class="a"></div>


<div class="av sav" style="left:35.5px;background:#5b5fb0;color:#fff">+2</div>
<div class="av sav" style="left:74.5px;background:#f3d6cd">T</div>
<div class="av sav" style="left:113.8px;background:#e4dcf1">H</div>
<div class="av sav" style="left:153.4px;background:#dbe5e8">O</div>
<div class="av sav" style="left:192.8px;background:#f6d9d6">M</div>
<div class="av sav" style="left:233px;background:#f5e7c0">J</div>
<div class="tile" style="left:263.6px;width:82px"></div>
<div class="av sav" style="left:294.6px;background:#ecdcd9">R</div>
<div class="lbl" style="left:271.6px;width:59.4px"></div>
<!-- video tile -->
<div class="a" id="video" style="left:347.8px;top:363px;width:85.2px;height:45px;overflow:hidden;background:#d9d6d3">
 <div class="a" style="left:0;top:0;width:85.2px;height:6px;background:linear-gradient(#a9a5a1,#c2bfbb)"></div>
 <div class="a" style="left:0;top:0;width:13px;height:45px;background:linear-gradient(90deg,#bdb9b5,#cbc8c4)"></div>
 <div class="a" style="left:13px;top:6px;width:58px;height:26px;background:linear-gradient(90deg,#d6d3d0,#e2e0dd 50%,#d2cfcc)"></div>
 <div class="a" style="left:15px;top:7px;width:52px;height:1.6px;background:#efeeec"></div>
 <div class="a" style="left:70px;top:4px;width:15.2px;height:25px;background:linear-gradient(#f0efed,#e4e2df);transform:skewY(-12deg)"></div>
 <div class="a" style="left:0;top:31px;width:85.2px;height:14px;background:linear-gradient(#a39e99,#8a8580)"></div>
 <div class="a" style="left:10px;top:31px;width:30px;height:6px;background:#c9c6c2;border-radius:2px"></div>
 <div class="a" style="left:11px;top:30px;width:6px;height:3px;background:#4a4540;border-radius:1px"></div>
 <div class="a" style="left:70px;top:28px;width:15.2px;height:17px;background:#8f8a85"></div>
 <!-- woman -->
 <div class="a" style="left:44px;top:4px;width:22px;height:27px;background:#4b3b31;border-radius:48% 48% 40% 40%"></div>
 <div class="a" style="left:49.6px;top:9px;width:11.4px;height:15.4px;background:radial-gradient(ellipse at 50% 45%,#e2bba6 0 60%,#c99d88 100%);border-radius:45% 45% 50% 50%"></div>
 <div class="a" style="left:51px;top:22px;width:8px;height:8px;background:#caa08b"></div>
 <div class="a" style="left:36px;top:27px;width:42px;height:20px;background:#262c3c;border-radius:14px 14px 0 0"></div>
 <div class="a" style="left:49px;top:30px;width:12px;height:6px;background:#9aa39f;border-radius:0 0 6px 6px"></div>
 <div class="a" style="left:51px;top:29px;width:8px;height:4.6px;background:#d2a892;border-radius:0 0 4px 4px"></div>
 <div class="a" style="left:43.4px;top:8.4px;width:2.4px;height:14px;background:#eceae8;border-radius:1.2px;transform:rotate(8deg)"></div>
 <div class="a" style="left:36px;top:24px;width:10px;height:2px;background:#e6e4e2;transform:rotate(-38deg)"></div>
 <div class="a" style="left:43px;top:27px;width:9px;height:6px;background:#d8ae98;border-radius:3px"></div>
 <div class="a" style="left:33px;top:31px;width:14px;height:16px;background:#283042;border-radius:5px;transform:rotate(28deg)"></div>
</div>
<div class="t sx" style="left:354px;top:399.4px;font-size:5.6px;font-weight:bold;color:#fff;transform:scaleX(.93);text-shadow:0 0 1px rgba(0,0,0,.6)">Joly-Schaerfl, Andrea</div>
<div class="tile" style="left:434.4px;width:82.6px"></div>
<div class="av sav" style="left:464px;background:#f6d9d6">M</div>
<div class="lbl" style="left:439px;width:66px"></div>
<div class="tile" style="left:519px;width:82px"></div>
<div class="av sav" style="left:548.6px;background:#f8d7df">H</div>
<div class="lbl" style="left:523px;width:74px"></div>

<!-- ================= RIGHT PANEL ================= -->
<div id="panel" class="a"></div>
<!-- panel content -->
<div class="t sx" style="left:612.3px;top:65.2px;font-size:8.3px;font-weight:bold;transform:scaleX(.9)">Teilnehmer</div>
<svg style="left:716.8px;top:69.6px" width="8" height="2.4" viewBox="0 0 8 2.4" fill="#eee"><circle cx="1.1" cy="1.2" r="0.95"/><circle cx="4" cy="1.2" r="0.95"/><circle cx="6.9" cy="1.2" r="0.95"/></svg>
<svg style="left:732.6px;top:67.8px" width="5.6" height="5.6" viewBox="0 0 5.6 5.6"><path d="M0.3 0.3L5.3 5.3M5.3 0.3L0.3 5.3" stroke="#e6e6e6" stroke-width="0.8"/></svg>
<div class="a" style="left:612.3px;top:86.2px;width:111px;height:14.6px;background:#3b3a39;border-radius:1.5px"></div>
<div class="t sx" style="left:618px;top:90px;font-size:7.2px;color:#c8c6c4;transform:scaleX(.9)">Namen eingeben</div>
<svg style="left:732px;top:90px" width="8.4" height="6.4" viewBox="0 0 8.4 6.4" fill="none" stroke="#d6d6d6" stroke-width="0.7"><rect x="0.4" y="0.6" width="5" height="3.6" rx="1.8"/><rect x="3" y="2.2" width="5" height="3.6" rx="1.8"/></svg>
<div class="a" style="left:605.9px;top:119.8px;width:0;height:0;border-top:2.3px solid #e0e0e0;border-left:1.9px solid transparent;border-right:1.9px solid transparent"></div>
<div class="t sx" style="left:612.8px;top:115.4px;font-size:5.7px;font-weight:bold;transform:scaleX(.9)">In dieser Besprechung</div>
<div class="t sx" style="left:612.8px;top:122.8px;font-size:5.7px;font-weight:bold;transform:scaleX(.9)">(12)</div>
<div class="a btn" style="left:671.6px;top:115.6px;width:56.2px;height:11.4px;border:0.7px solid #5a5958;background:#2d2c2c"></div>
<div class="t sx" style="left:678.6px;top:118.2px;font-size:6.2px;font-weight:bold;transform:scaleX(.88)">Alle stummsch...</div>
<div class="a" style="left:739.8px;top:109.8px;width:3.6px;height:244.8px;background:#5b5a59;border-radius:1.8px"></div>
<div class="a" style="left:746.8px;top:103px;width:3.2px;height:301.8px;background:#4d4c4b"></div>
<div class="a" style="left:632.4px;top:154.6px;width:83.4px;height:249px;background:#212020;border:1.7px solid #393838"></div>
<div class="av pav" style="top:130px;background:radial-gradient(ellipse 4.2px 5px at 50% 42%,#d9b49c 0 70%,transparent 100%),radial-gradient(ellipse 8px 5px at 50% 108%,#e2deda 0 80%,transparent 100%),radial-gradient(ellipse 5px 3px at 50% 18%,#6a5a4a 0 80%,transparent 100%),#8f9690"></div>
<div class="dot" style="top:140.6px"></div>
<div class="t sx" style="left:631.4px;top:134.6px;font-size:7.5px;color:#fff;transform:scaleX(.873);-webkit-text-stroke:0.25px #fff">Förstner, Maximilian</div>
<svg style="left:720px;top:133.2px" width="8" height="9.6" viewBox="0 0 8 9.6" fill="none" stroke="#d8d8d8" stroke-width="0.75"><rect x="2.6" y="0.6" width="2.8" height="4.8" rx="1.4"/><path d="M1.3 4.2a2.7 2.7 0 0 0 5.4 0M4 7v1.8"/><path d="M0.8 8.8L7.4 0.8" stroke-width="0.8"/></svg>
<div class="av pav" style="top:153.7px;background:#f8dbe0;color:#4a1f28">H</div>
<div class="dot" style="top:163.8px"></div>
<svg style="left:720px;top:156.4px" width="8" height="9.6" viewBox="0 0 8 9.6" fill="none" stroke="#d8d8d8" stroke-width="0.75"><rect x="2.6" y="0.6" width="2.8" height="4.8" rx="1.4"/><path d="M1.3 4.2a2.7 2.7 0 0 0 5.4 0M4 7v1.8"/><path d="M0.8 8.8L7.4 0.8" stroke-width="0.8"/></svg>
<div class="av pav" style="top:176.5px;background:#e3dcf3;color:#2e2850">H</div>
<div class="dot" style="top:187.1px"></div>
<svg style="left:720px;top:179.7px" width="8" height="9.6" viewBox="0 0 8 9.6" fill="none" stroke="#d8d8d8" stroke-width="0.75"><rect x="2.6" y="0.6" width="2.8" height="4.8" rx="1.4"/><path d="M1.3 4.2a2.7 2.7 0 0 0 5.4 0M4 7v1.8"/><path d="M0.8 8.8L7.4 0.8" stroke-width="0.8"/></svg>
<div class="a" style="left:610.6px;top:198.4px;width:18.8px;height:18.8px;border-radius:50%;border:0.9px solid #cfcbe6"></div>
<div class="av pav" style="top:199.8px;background:#f6d6dd;color:#4a1f28">AJ</div>
<div class="dot" style="top:210.4px"></div>
<svg style="left:720.6px;top:203.2px" width="7" height="9.4" viewBox="0 0 7 9.4" fill="none" stroke="#e4e4e4" stroke-width="0.8"><rect x="2.1" y="0.4" width="2.8" height="5" rx="1.4" fill="#e4e4e4"/><path d="M0.8 4.2a2.7 2.7 0 0 0 5.4 0M3.5 7v1.8"/></svg>
<div class="av pav" style="top:223.2px;background:#f5e6c3;color:#4a3a12">J</div>
<div class="dot" style="top:233.8px"></div>
<svg style="left:720px;top:226.4px" width="8" height="9.6" viewBox="0 0 8 9.6" fill="none" stroke="#d8d8d8" stroke-width="0.75"><rect x="2.6" y="0.6" width="2.8" height="4.8" rx="1.4"/><path d="M1.3 4.2a2.7 2.7 0 0 0 5.4 0M4 7v1.8"/><path d="M0.8 8.8L7.4 0.8" stroke-width="0.8"/></svg>
<div class="av pav" style="top:246.5px;background:#cfe8ec;color:#1c3c44">K</div>
<div class="dot" style="top:257.1px"></div>
<svg style="left:720px;top:249.7px" width="8" height="9.6" viewBox="0 0 8 9.6" fill="none" stroke="#d8d8d8" stroke-width="0.75"><rect x="2.6" y="0.6" width="2.8" height="4.8" rx="1.4"/><path d="M1.3 4.2a2.7 2.7 0 0 0 5.4 0M4 7v1.8"/><path d="M0.8 8.8L7.4 0.8" stroke-width="0.8"/></svg>
<div class="av pav" style="top:269.8px;background:#f6d4d1;color:#4a2620">M</div>
<div class="dot" style="top:280.4px"></div>
<svg style="left:720px;top:273.0px" width="8" height="9.6" viewBox="0 0 8 9.6" fill="none" stroke="#d8d8d8" stroke-width="0.75"><rect x="2.6" y="0.6" width="2.8" height="4.8" rx="1.4"/><path d="M1.3 4.2a2.7 2.7 0 0 0 5.4 0M4 7v1.8"/><path d="M0.8 8.8L7.4 0.8" stroke-width="0.8"/></svg>
<div class="av pav" style="top:293.2px;background:#f6d4d1;color:#4a2620">M</div>
<div class="dot" style="top:303.8px;background:#fff;border:1.4px solid #2d2c2c;box-shadow:inset 0 0 0 1px #fff,inset 0 0 0 2px #444"></div>
<svg style="left:720px;top:296.4px" width="8" height="9.6" viewBox="0 0 8 9.6" fill="none" stroke="#d8d8d8" stroke-width="0.75"><rect x="2.6" y="0.6" width="2.8" height="4.8" rx="1.4"/><path d="M1.3 4.2a2.7 2.7 0 0 0 5.4 0M4 7v1.8"/><path d="M0.8 8.8L7.4 0.8" stroke-width="0.8"/></svg>
<div class="av pav" style="top:316.6px;background:#d5e4f0;color:#22303e">O</div>
<div class="dot" style="top:327.2px"></div>
<svg style="left:720px;top:319.8px" width="8" height="9.6" viewBox="0 0 8 9.6" fill="none" stroke="#d8d8d8" stroke-width="0.75"><rect x="2.6" y="0.6" width="2.8" height="4.8" rx="1.4"/><path d="M1.3 4.2a2.7 2.7 0 0 0 5.4 0M4 7v1.8"/><path d="M0.8 8.8L7.4 0.8" stroke-width="0.8"/></svg>
<div class="av pav" style="top:341.6px;background:#efdad6;color:#40282a">R</div>
<div class="dot" style="top:352.2px"></div>
<svg style="left:720.6px;top:345.0px" width="7" height="9.4" viewBox="0 0 7 9.4" fill="none" stroke="#e4e4e4" stroke-width="0.8"><rect x="2.1" y="0.4" width="2.8" height="5" rx="1.4" fill="#e4e4e4"/><path d="M0.8 4.2a2.7 2.7 0 0 0 5.4 0M3.5 7v1.8"/></svg>
<div class="av pav" style="top:365.0px;background:#f6d2ca;color:#4a2620">T</div>
<div class="dot" style="top:375.6px"></div>
<svg style="left:720px;top:368.2px" width="8" height="9.6" viewBox="0 0 8 9.6" fill="none" stroke="#d8d8d8" stroke-width="0.75"><rect x="2.6" y="0.6" width="2.8" height="4.8" rx="1.4"/><path d="M1.3 4.2a2.7 2.7 0 0 0 5.4 0M4 7v1.8"/><path d="M0.8 8.8L7.4 0.8" stroke-width="0.8"/></svg>
<div class="av pav" style="top:388.4px;background:#d6e4ef;color:#22303e">RZ</div>
<div class="dot" style="top:399.0px"></div>
<svg style="left:720px;top:391.6px" width="8" height="9.6" viewBox="0 0 8 9.6" fill="none" stroke="#d8d8d8" stroke-width="0.75"><rect x="2.6" y="0.6" width="2.8" height="4.8" rx="1.4"/><path d="M1.3 4.2a2.7 2.7 0 0 0 5.4 0M4 7v1.8"/><path d="M0.8 8.8L7.4 0.8" stroke-width="0.8"/></svg>

<div class="a" style="left:0;top:406.2px;width:750px;height:1.8px;background:#121212"></div>
</body>
</html>
